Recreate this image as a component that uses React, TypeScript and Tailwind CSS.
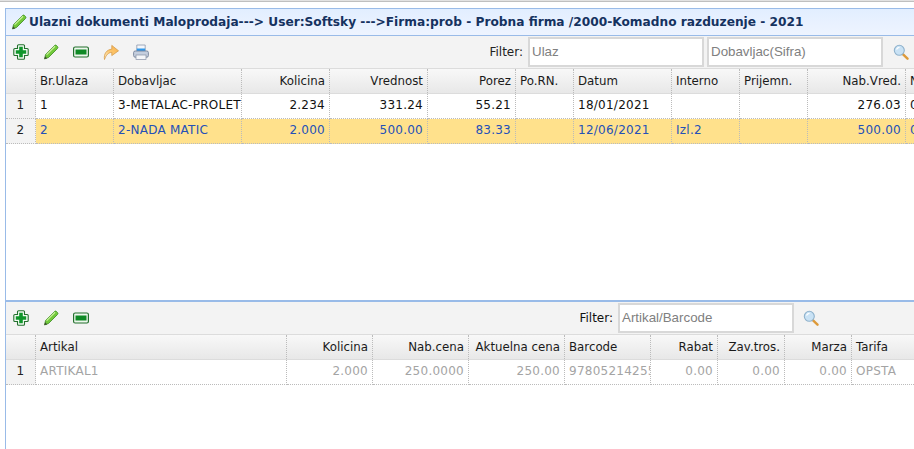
import React from "react";

const topCols = [
  { w: 78, h: "Br.Ulaza", a: "l" }, { w: 128, h: "Dobavljac", a: "l" }, { w: 88, h: "Kolicina", a: "r" },
  { w: 98, h: "Vrednost", a: "r" }, { w: 88, h: "Porez", a: "r" }, { w: 58, h: "Po.RN.", a: "l" },
  { w: 98, h: "Datum", a: "l" }, { w: 68, h: "Interno", a: "l" }, { w: 68, h: "Prijemn.", a: "l" },
  { w: 98, h: "Nab.Vred.", a: "r" }, { w: 60, h: "N", a: "l" },
];
const topRows = [
  ["1", "3-METALAC-PROLETER", "2.234", "331.24", "55.21", "", "18/01/2021", "", "", "276.03", "0"],
  ["2", "2-NADA MATIC", "2.000", "500.00", "83.33", "", "12/06/2021", "Izl.2", "", "500.00", "0"],
];
const botCols = [
  { w: 251, h: "Artikal", a: "l" }, { w: 86, h: "Kolicina", a: "r" }, { w: 96, h: "Nab.cena", a: "r" },
  { w: 96, h: "Aktuelna cena", a: "r" }, { w: 86, h: "Barcode", a: "l" }, { w: 67, h: "Rabat", a: "r" },
  { w: 67, h: "Zav.tros.", a: "r" }, { w: 67, h: "Marza", a: "r" }, { w: 70, h: "Tarifa", a: "l" },
];
const botRow = ["ARTIKAL1", "2.000", "250.0000", "250.00", "9780521425575", "0.00", "0.00", "0.00", "OPSTA"];

function Plus() {
  return (
    <svg width="16" height="16" viewBox="0 0 16 16">
      <path d="M5.5 .8h5a1 1 0 0 1 1 1v2.7h2.7a1 1 0 0 1 1 1v5a1 1 0 0 1-1 1h-2.7v2.7a1 1 0 0 1-1 1h-5a1 1 0 0 1-1-1v-2.7H1.8a1 1 0 0 1-1-1v-5a1 1 0 0 1 1-1h2.7V1.8a1 1 0 0 1 1-1z" fill="#f2faf2" stroke="#23702d" strokeWidth="1.1" />
      <path d="M6.2 2.8h3.6v3.4h3.4v3.6H9.8v3.4H6.2V9.8H2.8V6.2h3.4z" fill="#0f962a" />
    </svg>
  );
}
function Pencil() {
  return (
    <svg width="16" height="16" viewBox="0 0 16 16">
      <path d="M1.5 15l1.1-4.6 8.9-8.9c.6-.6 1.4-.6 2 0l1 1c.6.6.6 1.4 0 2L5.6 13.4z" fill="#72c93a" stroke="#3a8a22" strokeWidth="0.8" strokeLinejoin="round" />
      <path d="M3.6 10.6l8.4-8.4" stroke="#c9f09c" strokeWidth="1.3" />
      <path d="M1.5 15l.6-2.7 2.1 2.1z" fill="#3f4a30" />
    </svg>
  );
}
function Minus() {
  return (
    <svg width="16" height="12" viewBox="0 0 16 12">
      <rect x="0.6" y="1" width="14.8" height="10" rx="1.5" fill="#eef7ee" stroke="#23702d" strokeWidth="1.2" />
      <rect x="2.5" y="3.5" width="11" height="5" fill="#0f8a25" />
    </svg>
  );
}
function Forward() {
  return (
    <svg width="16" height="16" viewBox="0 0 16 16">
      <defs>
        <linearGradient id="fw" x1="0" y1="1" x2="1" y2="0">
          <stop offset="0" stopColor="#fff1cf" />
          <stop offset="0.5" stopColor="#fcc56b" />
          <stop offset="1" stopColor="#f9b24c" />
        </linearGradient>
      </defs>
      <path d="M1.5 15.5C.6 10 3.5 5.6 8.8 5.2V1.4L15.5 6.8 8.8 11.6V8.4C5.5 8.4 3 11 1.5 15.5z" fill="url(#fw)" stroke="#d59a48" strokeWidth="0.8" strokeLinejoin="round" />
    </svg>
  );
}
function Printer() {
  return (
    <svg width="16" height="16" viewBox="0 0 16 16">
      <path d="M3.8 8V1h8.4v7z" fill="#f3f6fb" stroke="#8c98ac" strokeWidth="0.8" />
      <rect x="3.8" y="4.5" width="8.4" height="3.5" fill="#2f97ea" />
      <rect x="0.6" y="7" width="14.8" height="6.2" rx="1.6" fill="#c4cede" stroke="#76839a" strokeWidth="0.9" />
      <rect x="3" y="11" width="10" height="4.4" fill="#f4f6f9" stroke="#8590a4" strokeWidth="0.7" />
    </svg>
  );
}
function Search() {
  return (
    <svg width="16" height="16" viewBox="0 0 16 16">
      <path d="M9.8 10.2l4.7 4.5" stroke="#dd9a3a" strokeWidth="2.4" strokeLinecap="round" />
      <circle cx="6.3" cy="6.3" r="5" fill="#c9e2f5" stroke="#8fb2cc" strokeWidth="1.1" />
      <path d="M3.5 5.5c.5-1.5 1.7-2.2 3-2.2" stroke="#fff" strokeWidth="1.3" fill="none" />
    </svg>
  );
}

function Header({ cols }: { cols: { w: number; h: string; a: string }[] }) {
  return (
    <div className="flex h-[26px] shrink-0 border-y border-[#dcdcdc] bg-gradient-to-b from-[#f8f8f8] to-[#e8e8e8] text-[11.8px] text-[#1a1a1a]">
      <div className="w-[30px] shrink-0 border-r border-dotted border-[#bbbbbb]" />
      {cols.map((c) => (
        <div
          key={c.h}
          style={{ width: c.w }}
          className={`shrink-0 overflow-hidden whitespace-nowrap border-r border-dotted border-[#bbbbbb] px-[4px] leading-[24px] ${c.a === "r" ? "text-right" : "text-left"}`}
        >
          {c.h}
        </div>
      ))}
    </div>
  );
}

function Row({ n, cols, cells, cls }: { n: string; cols: { w: number; a: string }[]; cells: string[]; cls: string }) {
  return (
    <div className="flex h-[25px] shrink-0 text-[12px] tracking-[0.25px]">
      <div className="w-[30px] shrink-0 border-r border-b border-dotted border-[#bbbbbb] bg-[#f3f3f3] text-center leading-[23px] text-[#222222]">{n}</div>
      {cols.map((c, i) => (
        <div
          key={i}
          style={{ width: c.w }}
          className={`shrink-0 overflow-hidden whitespace-nowrap border-r border-b border-dotted border-[#bbbbbb] px-[4px] leading-[23px] ${c.a === "r" ? "text-right" : "text-left"} ${cls}`}
        >
          {cells[i]}
        </div>
      ))}
    </div>
  );
}

const inputCls = "h-[30px] w-[176px] border-2 border-[#d8d8d8] bg-white pl-[2px] font-['Liberation_Sans',sans-serif] text-[13.33px] leading-[26px] text-[#808080]";

export default function App() {
  return (
    <div className="h-[449px] w-[914px] overflow-hidden bg-white font-['DejaVu_Sans',sans-serif] text-[12px] text-[#222222]">
      <div className="h-[1px] bg-[#e2e2e2]" />
      <div className="h-[1px] bg-[#bfbfbf]" />
      <div className="ml-[5px] mt-[6px] flex h-[441px] flex-col border-l border-[#99bbe8]">
        <div className="flex h-[28px] shrink-0 items-center gap-[2px] border-y border-[#99bbe8] bg-gradient-to-b from-[#e2eeff] to-[#eef4ff] pl-[5px] text-[12.2px] font-bold text-[#15325f]">
          <span className="shrink-0"><Pencil /></span>
          <span className="whitespace-nowrap">Ulazni dokumenti Maloprodaja---&gt; User:Softsky ---&gt;Firma:prob - Probna firma /2000-Komadno razduzenje - 2021</span>
        </div>
        <div className="flex h-[32px] shrink-0 items-center bg-[#f3f3f3] pl-[7px]">
          <div className="flex items-center gap-[14px]">
            <Plus /><Pencil /><Minus /><Forward /><Printer />
          </div>
          <div className="ml-auto flex items-center">
            <span className="mr-[5px] text-[#222222]">Filter:</span>
            <div className={inputCls}>Ulaz</div>
            <div className={`ml-[3px] ${inputCls}`}>Dobavljac(Sifra)</div>
            <span className="ml-[10px] mr-[5px]"><Search /></span>
          </div>
        </div>
        <Header cols={topCols} />
        <Row n="1" cols={topCols} cells={topRows[0]} cls="bg-white text-[#111111]" />
        <Row n="2" cols={topCols} cells={topRows[1]} cls="bg-[#ffe18c] text-[#2450b8]" />
        <div className="flex-1" />
        <div className="h-[2px] shrink-0 bg-[#99bbe8]" />
        <div className="flex h-[32px] shrink-0 items-center bg-[#f3f3f3] pl-[7px]">
          <div className="flex items-center gap-[14px]">
            <Plus /><Pencil /><Minus />
          </div>
          <div className="ml-auto flex items-center">
            <span className="mr-[5px] text-[#111111]">Filter:</span>
            <div className={inputCls}>Artikal/Barcode</div>
            <span className="ml-[9px] mr-[95px]"><Search /></span>
          </div>
        </div>
        <Header cols={botCols} />
        <Row n="1" cols={botCols} cells={botRow} cls="bg-white text-[#a4a4a4]" />
        <div className="h-[64px] shrink-0" />
      </div>
    </div>
  );
}
